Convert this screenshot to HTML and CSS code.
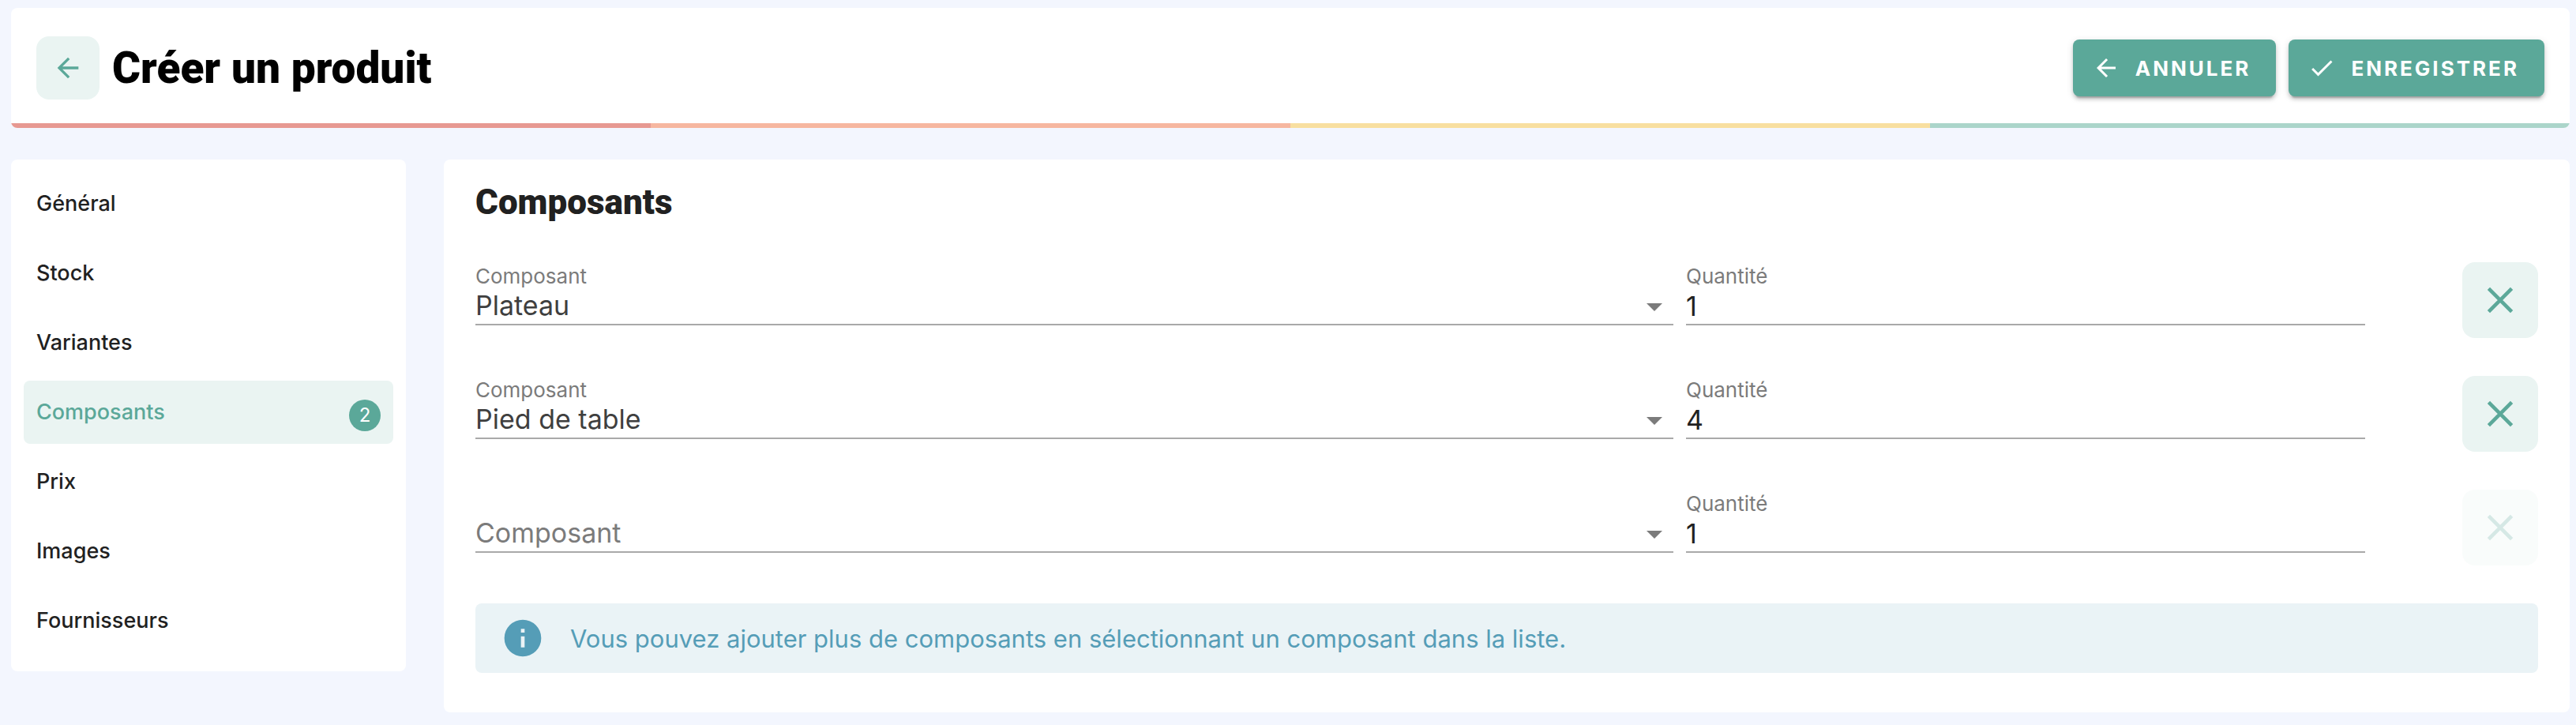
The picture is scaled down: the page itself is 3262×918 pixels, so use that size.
FILE: index.html
```html
<!DOCTYPE html>
<html lang="fr">
<head>
  <meta charset="UTF-8" />
  <meta name="viewport" content="width=device-width, initial-scale=1.0"/>
  <title>Créer un produit</title>
  <link rel="stylesheet" href="styles.css">
</head>
<body>

  <header class="page-header">
    <div class="toolbar">
      <button class="icon-btn back" aria-label="Retour">
        <svg viewBox="0 0 24 24"><path d="M20 11H7.83l5.59-5.59L12 4l-8 8 8 8 1.41-1.41L7.83 13H20z"/></svg>
      </button>
      <h1>Créer un produit</h1>
      <div class="actions">
        <button class="btn">
          <svg viewBox="0 0 24 24"><path d="M20 11H7.83l5.59-5.59L12 4l-8 8 8 8 1.41-1.41L7.83 13H20z"/></svg>
          Annuler
        </button>
        <button class="btn">
          <svg viewBox="0 0 24 24"><path d="M9 16.2 4.8 12l-1.4 1.4L9 19 21 7l-1.4-1.4z"/></svg>
          Enregistrer
        </button>
      </div>
    </div>
    <div class="stripes">
      <span class="red"></span>
      <span class="orange"></span>
      <span class="yellow"></span>
      <span class="green"></span>
    </div>
  </header>

  <div class="layout">
    <nav class="sidebar">
      <a href="#general">Général</a>
      <a href="#stock">Stock</a>
      <a href="#variantes">Variantes</a>
      <a href="#composants" class="active">Composants <span class="badge">2</span></a>
      <a href="#prix">Prix</a>
      <a href="#images">Images</a>
      <a href="#fournisseurs">Fournisseurs</a>
    </nav>

    <main class="panel">
      <h2>Composants</h2>

      <div class="row">
        <div class="field component">
          <label for="component1">Composant</label>
          <select id="component1">
            <option>Plateau</option>
            <option>Pied de table</option>
          </select>
        </div>
        <div class="field quantity">
          <label for="quantity1">Quantité</label>
          <input type="number" id="quantity1" value="1">
        </div>
        <button class="icon-btn remove" aria-label="Supprimer">
          <svg viewBox="0 0 24 24"><path d="M5 5l14 14M19 5L5 19"/></svg>
        </button>
      </div>

      <div class="row">
        <div class="field component">
          <label for="component2">Composant</label>
          <select id="component2">
            <option>Pied de table</option>
            <option>Plateau</option>
          </select>
        </div>
        <div class="field quantity">
          <label for="quantity2">Quantité</label>
          <input type="number" id="quantity2" value="4">
        </div>
        <button class="icon-btn remove" aria-label="Supprimer">
          <svg viewBox="0 0 24 24"><path d="M5 5l14 14M19 5L5 19"/></svg>
        </button>
      </div>

      <div class="row">
        <div class="field component">
          <select class="empty" aria-label="Composant">
            <option>Composant</option>
          </select>
        </div>
        <div class="field quantity">
          <label for="quantity3">Quantité</label>
          <input type="number" id="quantity3" value="1">
        </div>
        <button class="icon-btn remove" aria-label="Supprimer" disabled>
          <svg viewBox="0 0 24 24"><path d="M5 5l14 14M19 5L5 19"/></svg>
        </button>
      </div>

      <div class="alert">
        <svg viewBox="0 0 24 24"><path d="M12 2a10 10 0 1 0 0 20 10 10 0 0 0 0-20zm1 15h-2v-6h2zm0-8h-2V7h2z"/></svg>
        <p>Vous pouvez ajouter plus de composants en sélectionnant un composant dans la liste.</p>
      </div>
    </main>
  </div>

</body>
</html>
```
FILE: styles.css
```css
:root {
  --bg: #f3f6fe;
  --primary: #5ba899;
  --primary-light: #eaf4f2;
  --info: #559db7;
  --text: #212121;
  --muted: #7b7b7b;
}

* {
  box-sizing: border-box;
}

body {
  font-family: Inter, sans-serif;
  background-color: var(--bg);
  color: var(--text);
  margin: 0;
  padding: 10px 8px 16px 14px;
}

button,
select,
input {
  font-family: inherit;
}

button {
  border: none;
  cursor: pointer;
}

h1,
h2 {
  font-family: Roboto, sans-serif;
  font-weight: 900;
  margin: 0;
}

.page-header {
  background-color: #fff;
  border-radius: 8px;
  overflow: hidden;
}

.toolbar {
  display: flex;
  align-items: center;
  gap: 16px;
  padding: 36px 32px 30px;
}

h1 {
  font-size: 55px;
  line-height: 76px;
  color: #000;
}

.icon-btn {
  display: flex;
  align-items: center;
  justify-content: center;
  padding: 0;
  background-color: var(--primary-light);
  color: var(--primary);
}

.back {
  width: 80px;
  height: 80px;
  border-radius: 16px;
}

.back svg {
  width: 40px;
  height: 40px;
  fill: currentColor;
}

.actions {
  display: flex;
  gap: 16px;
  margin-left: auto;
}

.btn {
  display: flex;
  align-items: center;
  gap: 19px;
  height: 72px;
  padding: 0 32px 0 24px;
  border-radius: 8px;
  background-color: var(--primary);
  color: #fff;
  font-size: 26px;
  font-weight: 700;
  letter-spacing: 3px;
  text-transform: uppercase;
  box-shadow: 0 6px 2px -4px rgba(0, 0, 0, 0.2), 0 4px 4px rgba(0, 0, 0, 0.14), 0 2px 10px rgba(0, 0, 0, 0.12);
}

.btn svg {
  width: 36px;
  height: 36px;
  fill: currentColor;
}

.stripes {
  display: flex;
  height: 6px;
}

.stripes span {
  flex: 1;
}

.red { background-color: #e79992; }
.orange { background-color: #f6b7a0; }
.yellow { background-color: #f8dfa0; }
.green { background-color: #abd5ca; }

.layout {
  display: flex;
  align-items: flex-start;
  gap: 48px;
  margin-top: 40px;
}

.sidebar {
  flex: 0 0 500px;
  display: flex;
  flex-direction: column;
  gap: 8px;
  padding: 16px 16px 24px;
  background-color: #fff;
  border-radius: 8px;
}

.sidebar a {
  display: flex;
  align-items: flex-end;
  justify-content: space-between;
  height: 80px;
  padding: 0 16px 16px;
  border-radius: 8px;
  color: var(--text);
  font-size: 27px;
  font-weight: 500;
  line-height: 48px;
  text-decoration: none;
}

.sidebar a.active {
  background-color: var(--primary-light);
  color: var(--primary);
}

.badge {
  width: 40px;
  height: 40px;
  border-radius: 50%;
  background-color: var(--primary);
  color: #fff;
  font-size: 24px;
  font-weight: 400;
  line-height: 40px;
  text-align: center;
}

.panel {
  flex: 1;
  padding: 20px 40px 50px;
  background-color: #fff;
  border-radius: 8px;
}

h2 {
  font-size: 44px;
  line-height: 68px;
  margin-bottom: 42px;
}

.row {
  display: grid;
  grid-template-columns: repeat(12, 1fr);
  gap: 16px;
  height: 96px;
  margin-bottom: 48px;
}

.field {
  display: flex;
  flex-direction: column;
  justify-content: flex-end;
  height: 80px;
}

.component {
  grid-column: span 7;
}

.quantity {
  grid-column: span 4;
}

.field label {
  color: var(--muted);
  font-size: 26px;
  line-height: 36px;
}

.field select,
.field input {
  appearance: none;
  width: 100%;
  height: 44px;
  padding: 0 0 4px;
  border: none;
  border-bottom: 2px solid #a9a9a9;
  border-radius: 0;
  background-color: transparent;
  color: var(--text);
  font-size: 34px;
  line-height: 38px;
  outline: none;
}

.field select {
  color: #3f3f3f;
  background-image: url("data:image/svg+xml,%3Csvg xmlns='http://www.w3.org/2000/svg' viewBox='0 0 20 10'%3E%3Cpath d='M0 0h20L10 10z' fill='%237b7b7b'/%3E%3C/svg%3E");
  background-repeat: no-repeat;
  background-position: right 14px top 16px;
  background-size: 20px 10px;
}

.field select.empty {
  color: var(--muted);
}

.remove {
  justify-self: end;
  width: 96px;
  height: 96px;
  border-radius: 16px;
}

.remove svg {
  width: 50px;
  height: 50px;
  fill: none;
  stroke: currentColor;
  stroke-width: 2.2;
}

.remove:disabled {
  opacity: 0.25;
  cursor: default;
}

.alert {
  display: flex;
  align-items: center;
  gap: 32px;
  min-height: 88px;
  padding: 0 32px;
  border-radius: 8px;
  background-color: #eaf3f6;
  color: var(--info);
}

.alert svg {
  width: 56px;
  height: 56px;
  fill: currentColor;
}

.alert p {
  margin: 0;
  font-size: 31px;
}
```
